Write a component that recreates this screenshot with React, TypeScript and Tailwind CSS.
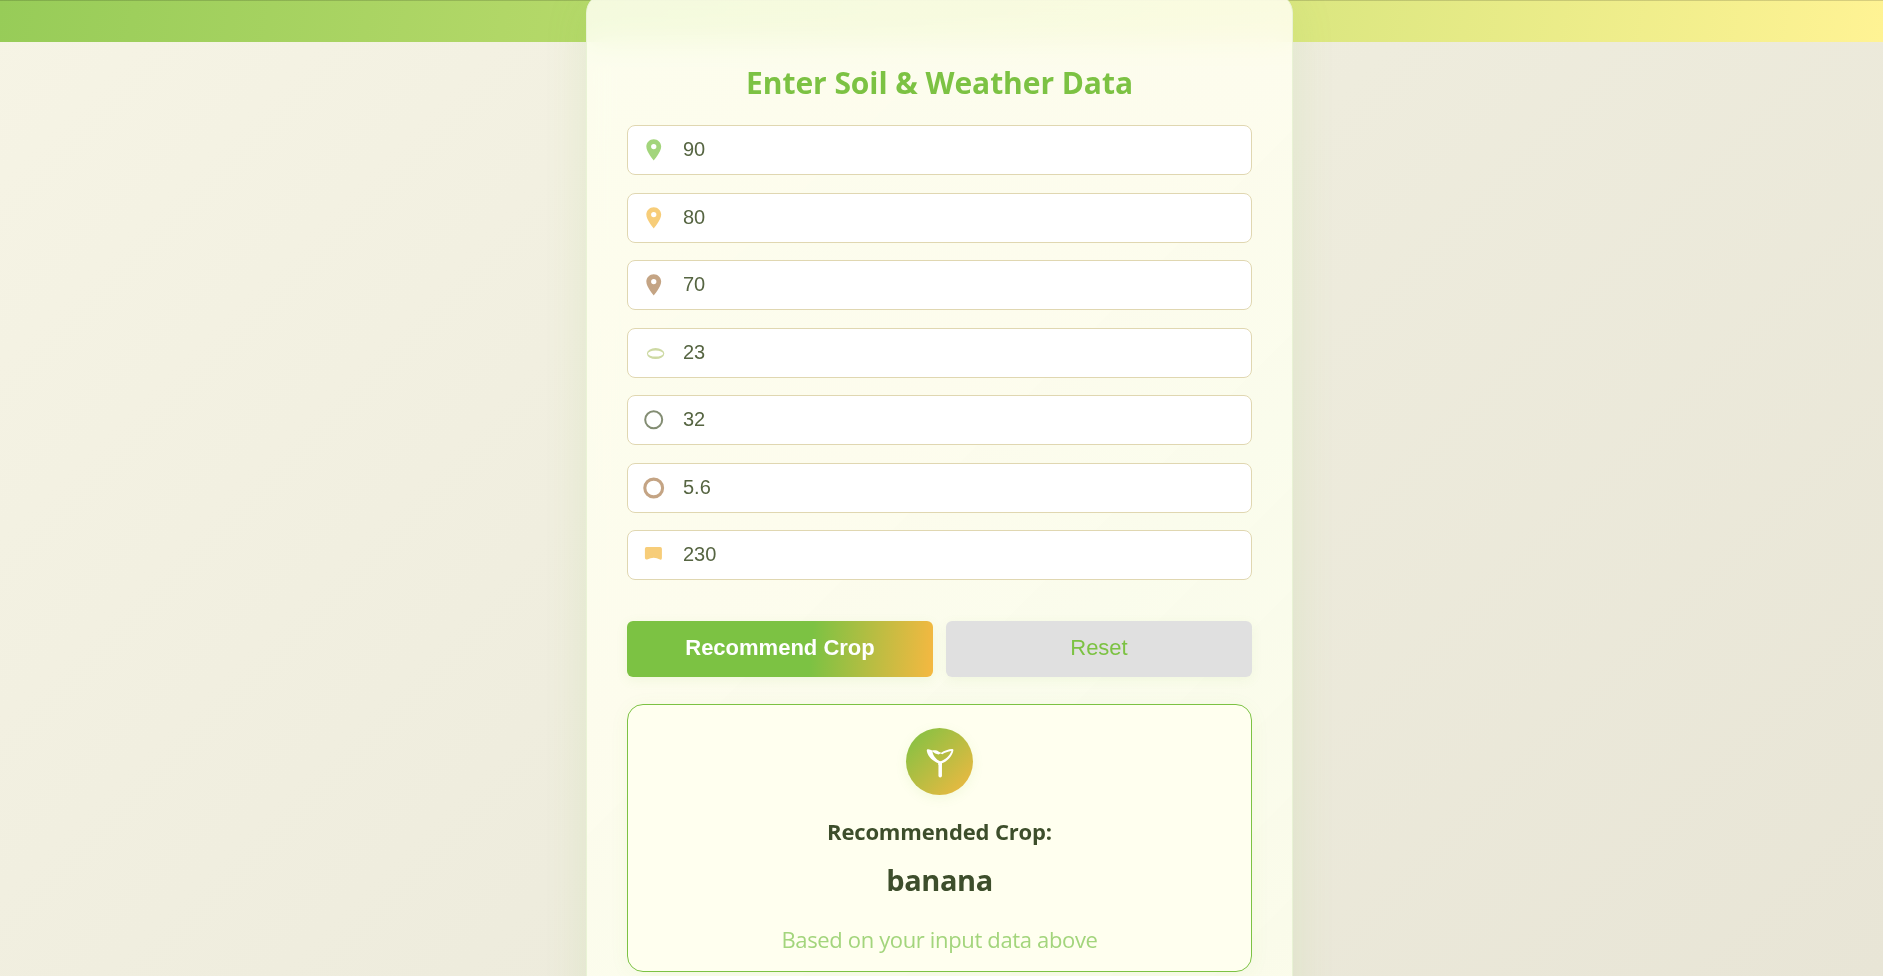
import type { ReactNode } from "react";

const Pin = ({ className }: { className: string }) => (
  <svg viewBox="0 0 24 24" className={"block size-[25.5px] fill-current " + className}>
    <path d="M12 2C8.13 2 5 5.13 5 9c0 5.25 7 13 7 13s7-7.75 7-13c0-3.87-3.13-7-7-7zm0 9.5a2.5 2.5 0 1 1 0-5 2.5 2.5 0 0 1 0 5z" />
  </svg>
);

const Frame = ({ children }: { children: ReactNode }) => (
  <svg viewBox="0 0 26 26" className="block size-[26px]">
    {children}
  </svg>
);

const fields: { value: string; icon: ReactNode }[] = [
  { value: "90", icon: <Pin className="text-[#a3d57c]" /> },
  { value: "80", icon: <Pin className="text-[#f7cd79]" /> },
  { value: "70", icon: <Pin className="text-[#c4a484]" /> },
  {
    value: "23",
    icon: (
      <Frame>
        <path
          fill="#cdd9a3"
          fillRule="evenodd"
          d="M5.900 13.600a8.700 5.500 0 1 1 17.400 0a8.700 5.500 0 1 1-17.400 0zM7 13.600a7.600 3 0 1 0 15.200 0a7.600 3 0 1 0-15.200 0z"
        />
      </Frame>
    ),
  },
  {
    value: "32",
    icon: (
      <Frame>
        <circle cx="12.7" cy="12.8" r="8.5" fill="none" stroke="#838d73" strokeWidth="2" />
      </Frame>
    ),
  },
  {
    value: "5.6",
    icon: (
      <Frame>
        <circle cx="12.7" cy="13" r="8.9" fill="none" stroke="#c4a484" strokeWidth="3.1" />
      </Frame>
    ),
  },
  {
    value: "230",
    icon: (
      <Frame>
        <path
          fill="#f7cd79"
          d="M5.600 5h13.600a1.700 1.700 0 0 1 1.700 1.700v9q0 2.700-1.900 1.700-6.200-3.200-12.800 0-2.300.7-2.300-1.900V6.700A1.700 1.700 0 0 1 5.600 5z"
        />
      </Frame>
    ),
  },
];

const Sprout = () => (
  <svg viewBox="0 0 34 34" className="block size-[34px] text-white">
    <path d="M17.200 19v12.700" fill="none" stroke="currentColor" strokeWidth="3.500" strokeLinecap="round" />
    <path
      fill="currentColor"
      fillRule="evenodd"
      d="M3.800 6.900C3.600 5.900 4.200 5.200 5.200 5.300C6.600 5.400 8 5.900 9.400 6.500C11.600 6.100 14.300 6.300 15.800 7.700L18.200 8.700C21.100 6.900 25.600 5.200 29.400 5.100Q30.700 5.100 30.400 6.600C29.200 12.800 24 17.700 19 19.300V21H15.400V19.300C10.100 17 5 13 3.800 6.900ZM9.400 7.300C9.900 11.800 13.200 15.600 17.200 17.400C22 16 26.800 12.100 28.400 7.100C25 7.600 21.900 8.700 19.400 10.200L17.400 9.500L15.600 10.400C13.200 10.300 11.100 9.100 9.400 7.300Z"
    />
  </svg>
);

export default function App() {
  return (
    <div className="h-[976px] overflow-hidden bg-[linear-gradient(135deg,#f6f4e5_0%,#eeecdd_50%,#e8e5d6_100%)] font-['Open_Sans','Noto_Sans',sans-serif]">
      <header className="h-[42px] border-t border-black/15 bg-[linear-gradient(100deg,#97cc58_0%,#b8da6b_34%,#dce781_70%,#fff394_100%)] bg-origin-border" />
      <main className="relative mx-auto -mt-[49px] h-[1060px] w-[707px] -translate-x-[2px] rounded-[20px] border border-[#e9f3d5] bg-[linear-gradient(135deg,rgba(253,255,239,0.87)_0%,rgba(255,254,239,0.87)_42%,rgba(252,254,238,0.88)_65%,rgba(252,253,236,0.9)_100%)] px-10 shadow-[0_8px_43px_rgba(124,194,66,0.13)] backdrop-blur-[14px]">
        <h1 className="pt-[67px] text-center text-[30px] leading-[44px] font-bold tracking-[-0.060px] whitespace-nowrap text-[#7cc243]">
          Enter Soil &amp; Weather Data
        </h1>
        <form className="mt-[20px]" onSubmit={(e) => e.preventDefault()}>
          <div className="flex flex-col gap-[17.550px]">
            {fields.map(({ value, icon }) => (
              <label
                key={value}
                className="flex h-[50px] items-center rounded-[8px] border border-[#e0d7b1] bg-white pl-[13px]"
              >
                <span className="flex w-[26px] shrink-0 justify-center">{icon}</span>
                <input
                  defaultValue={value}
                  className="ml-4 h-full min-w-0 flex-1 bg-transparent pb-[1px] font-['Liberation_Sans',Arial,sans-serif] text-[20px] text-[#566542] outline-none"
                />
              </label>
            ))}
          </div>
          <div className="mt-10 grid grid-cols-2 gap-[13px] pt-[0.300px] font-['Liberation_Sans',Arial,sans-serif] text-[22px]">
            <button
              type="submit"
              className="h-14 rounded-[6px] bg-[linear-gradient(95deg,#7cc243_0%,#7cc243_60%,#f5b841_100%)] pb-[2px] font-bold text-white shadow-[0_3px_12px_rgba(124,194,66,0.1)]"
            >
              Recommend Crop
            </button>
            <button
              type="reset"
              className="h-14 rounded-[6px] bg-[#e0e0e0] pb-[2px] text-[#7cc243] shadow-[0_3px_12px_rgba(124,194,66,0.08)]"
            >
              Reset
            </button>
          </div>
        </form>
        <section className="mt-[27px] flex h-[268px] flex-col items-center rounded-[16px] border border-[#7cc243] bg-[#ffffef] pt-[23px] whitespace-nowrap shadow-[0_3px_20px_rgba(124,194,66,0.06)]">
          <div className="flex size-[67px] items-center justify-center rounded-full bg-[linear-gradient(135deg,#7cc243_0%,#f5b841_100%)] shadow-[0_3px_12px_rgba(124,194,66,0.1)]">
            <Sprout />
          </div>
          <p className="mt-[20px] text-[22px] leading-8 font-bold tracking-[-0.15px] text-[#3d4e2b]">Recommended Crop:</p>
          <p className="mt-[11px] text-[29px] leading-[44px] font-bold tracking-[-0.4px] text-[#3d4e2b]">banana</p>
          <p className="mt-[21px] text-[22px] leading-8 tracking-[-0.350px] text-[#a3d57c]">Based on your input data above</p>
        </section>
      </main>
    </div>
  );
}
